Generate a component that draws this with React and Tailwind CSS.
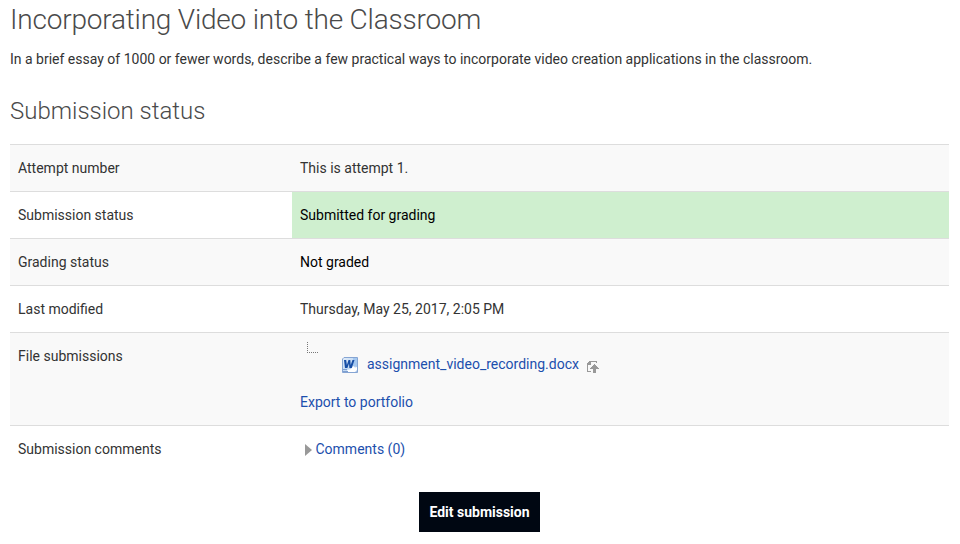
const rows = [
  { label: 'Attempt number', value: 'This is attempt 1.', cls: 'bg-[#f9f9f9]', cell: 'text-[#333333]' },
  { label: 'Submission status', value: 'Submitted for grading', cls: 'bg-white', cell: 'bg-[#cfefcf] text-black' },
  { label: 'Grading status', value: 'Not graded', cls: 'bg-[#f9f9f9]', cell: 'text-black' },
  { label: 'Last modified', value: 'Thursday, May 25, 2017, 2:05 PM', cls: 'bg-white', cell: 'text-[#333333]' },
];

function WordIcon() {
  return (
    <svg width="16" height="16" viewBox="0 0 16 16" className="shrink-0">
      <defs>
        <linearGradient id="word-page" x1="0" y1="0" x2="1" y2="1">
          <stop offset="0" stopColor="#e3edf9" />
          <stop offset="0.5" stopColor="#c3daf4" />
          <stop offset="1" stopColor="#a3bfe6" />
        </linearGradient>
      </defs>
      <path d="M2 .5h13.500v15H.500V2z" fill="url(#word-page)" stroke="#86a5d3" />
      <path d="M11 1h4v8h-4z" fill="#a5c8f0" />
      <path d="M6 15l-1-2 4-1 2-3 2 1.500 2-.500V13l-2 2z" fill="#ffffff" />
      <path d="M2 3h2.200l.700 5L6.500 3h1.800l.400 5L10.500 3h2L9.800 11H7.400L7 6.500 5.400 11H3z" fill="#174ea6" />
      <path d="M1 12.500h4M1 14.500h5" stroke="#7f9fd0" />
    </svg>
  );
}

function PortfolioIcon() {
  return (
    <svg width="12" height="12" viewBox="0 0 12 12" className="shrink-0" shapeRendering="crispEdges">
      <path d="M2 0h8v2H9V1H4v3H1v6h3v1H0V2h1V1h1z" fill="#999999" />
      <path d="M7 3h1v1h1v1h1v1h1v1h1v1H9v4H6V8H3V7h1V6h1V5h1V4h1z" fill="#999999" />
    </svg>
  );
}

export default function App() {
  return (
    <main className="h-[544px] w-[960px] overflow-hidden bg-white pl-[10px] pr-[11px] font-['Roboto',sans-serif] text-sm leading-5 text-[#333333]">
      <h1 className="pt-[4px] text-[28px] font-light leading-8 tracking-[-0.2px] text-[#4a4a4a]">Incorporating Video into the Classroom</h1>
      <p className="mt-[13px]">In a brief essay of 1000 or fewer words, describe a few practical ways to incorporate video creation applications in the classroom.</p>
      <h2 className="mt-[26px] text-2xl font-light leading-8 text-[#4a4a4a]">Submission status</h2>
      <div className="mt-[17px]">
        {rows.map((r) => (
          <div key={r.label} className={`flex h-[47px] border-t border-[#dddddd] ${r.cls}`}>
            <div className="w-[282px] px-2 py-[13px]">{r.label}</div>
            <div className={`flex-1 px-2 py-[13px] ${r.cell}`}>{r.value}</div>
          </div>
        ))}
        <div className="flex h-[93px] border-t border-[#dddddd] bg-[#f9f9f9]">
          <div className="w-[282px] px-2 py-[13px]">File submissions</div>
          <div className="flex-1 px-2 pt-[9px] text-[#1c4fad]">
            <div className="flex h-[50px]">
              <svg className="ml-[7px] h-[11px] w-[11px]" viewBox="0 0 11 11" shapeRendering="crispEdges">
                <path d="M.5 0v11M2 10.500h9" fill="none" stroke="#777777" strokeDasharray="1 1" />
              </svg>
              <div className="ml-[24px] mt-[12px] flex h-5 items-center">
                <span className="mt-[2px]"><WordIcon /></span>
                <a className="ml-[9px]">assignment_video_recording.docx</a>
                <span className="ml-2 mt-[5px]"><PortfolioIcon /></span>
              </div>
            </div>
            <a>Export to portfolio</a>
          </div>
        </div>
        <div className="flex h-[67px] border-t border-[#dddddd]">
          <div className="w-[282px] px-2 py-[13px]">Submission comments</div>
          <div className="mt-[13px] flex h-5 items-center pl-[13px] text-[#1c4fad]">
            <svg width="7" height="12" viewBox="0 0 7 12" className="mt-[1px]"><path d="M0 0l7 6-7 6z" fill="#999" /></svg>
            <a className="ml-[3.500px]">Comments (0)</a>
          </div>
        </div>
      </div>
      <button className="mx-auto block h-10 w-[121px] bg-[#000712] font-bold text-white">Edit submission</button>
    </main>
  );
}
